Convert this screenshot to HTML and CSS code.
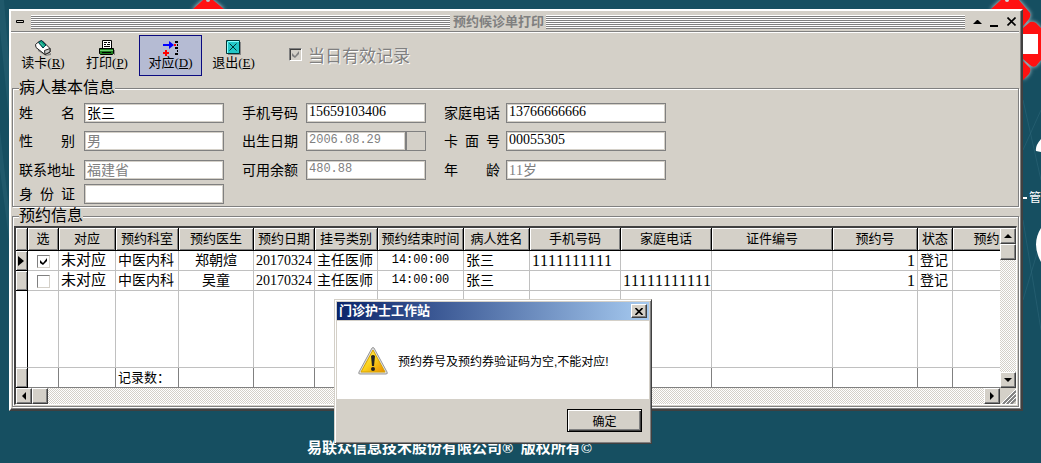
FILE: index.html
```
<!DOCTYPE html>
<html lang="zh-CN">
<head>
    <meta charset="UTF-8">
    <meta name="viewport" content="width=device-width, initial-scale=1.0">
    <title>预约候诊单打印</title>
    <link rel="stylesheet" href="styles.css">
</head>
<body>

<div class="desktop">
    <svg class="wallpaper wallpaper-left" width="240" height="463" viewBox="0 0 240 463">
        <path d="M0 30L9 120V60L4 0H0zM0 170L9 240V210L0 130z" fill="#2a6375" opacity=".5"/>
        <path class="glow" d="M192 10L203 0H213L225 10z" fill="#f11"/>
        <circle cx="208" cy="0" r="2" fill="#b9c7cc"/>
    </svg>
    <svg class="wallpaper wallpaper-right" width="61" height="463" viewBox="0 0 61 463">
        <path d="M43 100L61 180M43 150L61 110M43 220L61 330M43 300L61 240" stroke="#2d6678" fill="none" opacity=".6"/>
        <path class="glow" d="M10 10L22 -1H38L50 13Q51 16 49 19L43 26V10zM43 28L50 22Q53 21 56 23L61 28V60L56 66Q53 68 50 65L43 59zM43 61L50 68Q51 71 49 74L43 80z" fill="#f11"/>
        <circle cx="27" cy="0" r="2" fill="#cfdadd"/>
        <path d="M43 34H58V54H43z" fill="#fff"/>
        <path d="M61 139Q55 146 56 151L61 152zM61 228Q51 244 61 262z" fill="#fff"/>
        <path d="M43 198H47" stroke="#fff" stroke-width="2"/>
    </svg>
    <span class="wallpaper-text">管</span>

    <main class="window">
        <header class="titlebar">
            <button class="tb-btn" type="button" aria-label="系统菜单"><svg width="9" height="4" viewBox="0 0 9 4"><path d="M.5 .5h7v2h-7z" fill="none" stroke="#000"/></svg></button>
            <span class="stripes"></span>
            <h1>预约候诊单打印</h1>
            <span class="stripes"></span>
            <button class="tb-btn" type="button" aria-label="还原"><svg width="9" height="10" viewBox="0 0 9 10"><path d="M0 7L4 3h1l4 4z"/></svg></button>
            <button class="tb-btn" type="button" aria-label="最小化"><svg width="9" height="10" viewBox="0 0 9 10"><path d="M0 8h8v2H0z"/></svg></button>
            <button class="tb-btn" type="button" aria-label="关闭"><svg width="9" height="9" viewBox="0 0 9 9"><path d="M.5 .5l8 8M8.500 .5l-8 8" stroke="#000" stroke-width="1.600"/></svg></button>
        </header>

        <div class="toolbar">
            <button class="tool" type="button">
                <svg width="16" height="16" viewBox="0 0 16 16">
                    <path d="M3 9l8 6 5-2v2l-5 1-8-5z" fill="#888"/>
                    <path d="M.500 4.500L4 1.500l3-1 8 8v3.500L10 14.500 1 7.500z" fill="#fff" stroke="#222"/>
                    <path d="M9.500 10.500l5.500-2v3.500l-5 2.500z" fill="#c8c8c8" stroke="#222"/>
                    <path d="M3.500 2.500l3-2 4.500 4.500-3 3z" fill="#0aa080" stroke="#034"/>
                    <path d="M5 2.500l4 4" stroke="#5fe0c0"/>
                </svg>
                <span>读卡(<u>R</u>)</span>
            </button>
            <button class="tool" type="button">
                <svg width="16" height="16" viewBox="0 0 16 16">
                    <path d="M3.500 .500h9v8h-9z" fill="#fff" stroke="#000"/>
                    <path d="M5 2.500h3M9 2.500h2M5 4.500h2M8 4.500h3M5 6.500h6" stroke="#000"/>
                    <path d="M.500 8.500h14v5l-1 1h-12l-1-1z" fill="#1c7a1c" stroke="#000"/>
                    <path d="M1 10.500h13" stroke="#6fd06f"/>
                    <path d="M3 12.500h9" stroke="#000"/>
                    <path d="M15.500 10v5" stroke="#888"/>
                </svg>
                <span>打印(<u>P</u>)</span>
            </button>
            <button class="tool active" type="button">
                <svg width="16" height="16" viewBox="0 0 16 16">
                    <path d="M0 4h6V1l5 4-5 4V6H0z" fill="#00f"/>
                    <path d="M11 4h2v2h-2zM2 10h2v2h2v2H4v2H2v-2H0v-2h2z" fill="#f00"/>
                    <path d="M12 1h3v2h-3zM14 4h1v2h-1zM12 7h3v2h-3zM14 10h1v2h-1zM12 13h3v2h-3z"/>
                </svg>
                <span>对应(<u>D</u>)</span>
            </button>
            <button class="tool" type="button">
                <svg width="16" height="16" viewBox="0 0 16 16">
                    <path d="M2 2h13v13H2z" fill="#888"/>
                    <path d="M.500 .500h13v13H.500z" fill="#22c8c8" stroke="#033"/>
                    <path d="M2 1.500h11M1.500 2v11" stroke="#8ff"/>
                    <path d="M3.500 3.500l7 7M10.500 3.500l-7 7" stroke="#033"/>
                </svg>
                <span>退出(<u>E</u>)</span>
            </button>
            <label class="today"><input type="checkbox" checked disabled>当日有效记录</label>
        </div>

        <fieldset class="group">
            <legend>病人基本信息</legend>
            <div class="form">
                <label for="name">姓 名</label>
                <input id="name" class="w140" type="text" value="张三">
                <label for="mobile">手机号码</label>
                <input id="mobile" class="w120" type="text" value="15659103406">
                <label for="phone">家庭电话</label>
                <input id="phone" class="w160" type="text" value="13766666666">

                <label for="sex">性 别</label>
                <input id="sex" class="w140" type="text" value="男" disabled>
                <label for="birth">出生日期</label>
                <div class="date w120">
                    <input id="birth" class="mono" type="text" value="2006.08.29" disabled>
                    <button type="button" aria-label="选择日期" disabled></button>
                </div>
                <label for="card">卡 面 号</label>
                <input id="card" class="w160" type="text" value="00055305">

                <label for="address">联系地址</label>
                <input id="address" class="w140" type="text" value="福建省" disabled>
                <label for="balance">可用余额</label>
                <input id="balance" class="w120 mono" type="text" value="480.88" disabled>
                <label for="age">年 龄</label>
                <input id="age" class="w160" type="text" value="11岁" disabled>

                <label for="idcard">身 份 证</label>
                <input id="idcard" class="w140" type="text" value="">
            </div>
        </fieldset>

        <fieldset class="group grid-group">
            <legend>预约信息</legend>
            <div class="grid">
                <div class="table-wrap">
                    <table>
                        <colgroup>
                            <col class="c12"><col class="c31"><col class="c57"><col class="c63"><col class="c75">
                            <col class="c61"><col class="c63"><col class="c86"><col class="c66"><col class="c91">
                            <col class="c91"><col class="c121"><col class="c85"><col class="c35"><col class="c94">
                        </colgroup>
                        <thead>
                            <tr>
                                <th></th><th>选</th><th>对应</th><th>预约科室</th><th>预约医生</th>
                                <th>预约日期</th><th>挂号类别</th><th>预约结束时间</th><th>病人姓名</th><th>手机号码</th>
                                <th>家庭电话</th><th>证件编号</th><th>预约号</th><th>状态</th><th>预约来源</th>
                            </tr>
                        </thead>
                        <tbody>
                            <tr>
                                <td class="ind"><svg width="6" height="10" viewBox="0 0 6 10"><path d="M0 0l6 5-6 5z"/></svg></td>
                                <td class="center"><input type="checkbox" aria-label="选择郑朝煊" checked></td>
                                <td class="big">未对应</td><td>中医内科</td><td class="center">郑朝煊</td>
                                <td>20170324</td><td>主任医师</td><td class="center mono">14:00:00</td><td>张三</td><td class="tel">1111111111</td>
                                <td></td><td></td><td class="num">1</td><td>登记</td><td></td>
                            </tr>
                            <tr>
                                <td class="ind"></td>
                                <td class="center"><input type="checkbox" aria-label="选择吴童"></td>
                                <td class="big">未对应</td><td>中医内科</td><td class="center">吴童</td>
                                <td>20170324</td><td>主任医师</td><td class="center mono">14:00:00</td><td>张三</td><td></td>
                                <td class="tel">11111111111</td><td></td><td class="num">1</td><td>登记</td><td></td>
                            </tr>
                            <tr class="filler">
                                <td></td><td></td><td></td><td></td><td></td><td></td><td></td><td></td>
                                <td></td><td></td><td></td><td></td><td></td><td></td><td></td>
                            </tr>
                        </tbody>
                        <tfoot>
                            <tr>
                                <td class="ind"></td><td></td><td></td><td>记录数：</td><td></td><td></td><td></td><td></td>
                                <td></td><td></td><td></td><td></td><td></td><td></td><td></td>
                            </tr>
                        </tfoot>
                    </table>
                </div>
                <div class="scroll vscroll">
                    <button type="button" aria-label="向上"><svg width="8" height="4" viewBox="0 0 8 4"><path d="M0 4l4-4 4 4z"/></svg></button>
                    <span class="thumb"></span>
                    <button class="last" type="button" aria-label="向下"><svg width="8" height="4" viewBox="0 0 8 4"><path d="M0 0h8L4 4z"/></svg></button>
                </div>
                <div class="scroll hscroll">
                    <button type="button" aria-label="向左"><svg width="4" height="8" viewBox="0 0 4 8"><path d="M4 0v8L0 4z"/></svg></button>
                    <span class="thumb"></span>
                    <button class="last" type="button" aria-label="向右"><svg width="4" height="8" viewBox="0 0 4 8"><path d="M0 0l4 4-4 4z"/></svg></button>
                </div>
                <svg class="grip" width="16" height="16" viewBox="0 0 16 16">
                    <path d="M3 16L16 3M7 16l9-9M11 16l5-5" stroke="#808080" stroke-width="2"/>
                    <path d="M1 16L16 1M5 16L16 5M9 16l7-7" stroke="#fff"/>
                </svg>
            </div>
        </fieldset>
    </main>

    <p class="copyright">易联众信息技术股份有限公司® &nbsp;版权所有©</p>

    <div class="dialog" role="dialog" aria-labelledby="dialogTitle">
        <div class="dialog-title">
            <h2 id="dialogTitle">门诊护士工作站</h2>
            <button class="close" type="button" aria-label="关闭"><svg width="8" height="7" viewBox="0 0 8 7"><path d="M.5 0l7 7M7.500 0l-7 7" stroke="#000" stroke-width="1.600"/></svg></button>
        </div>
        <div class="dialog-body">
            <svg width="32" height="30" viewBox="0 0 32 30">
                <defs>
                    <linearGradient id="warn" x1="0" y1="0" x2="1" y2="1">
                        <stop offset="0" stop-color="#fff36a"/>
                        <stop offset=".5" stop-color="#fcd21c"/>
                        <stop offset="1" stop-color="#e88a00"/>
                    </linearGradient>
                </defs>
                <path d="M15 2Q16 1 17 2L30 26Q31 28 29 28H3Q1 28 2 26z" fill="#ddd" stroke="#999"/>
                <path d="M16 4L28 26H4z" fill="url(#warn)" stroke="#d9a400"/>
                <path d="M14 10Q16 8 18 10L17 20H15z" fill="#222"/>
                <circle cx="16" cy="23" r="2" fill="#222"/>
            </svg>
            <p>预约券号及预约券验证码为空,不能对应!</p>
        </div>
        <div class="dialog-footer">
            <button class="ok" type="button">确定</button>
        </div>
    </div>
</div>

</body>
</html>
```
FILE: styles.css
```
* {
    box-sizing: border-box;
}
body {
    margin: 0;
    font-family: "Liberation Serif", "Noto Sans CJK SC", serif;
    font-size: 14px;
    font-kerning: none;
    color: #000;
}
h1, h2, p {
    margin: 0;
}
button, input {
    font-family: inherit;
    font-kerning: inherit;
    color: inherit;
    padding: 0;
    margin: 0;
    border-radius: 0;
}
button {
    display: flex;
    align-items: center;
    justify-content: center;
    border: 0;
    background: #d4d0c8;
}
.mono {
    font-family: "Liberation Mono", "Noto Sans CJK SC", monospace;
    font-size: 12px;
}

/* desktop */
.desktop {
    position: relative;
    min-height: 100vh;
    padding: 9px 18px 0 9px;
    background: #164f61;
    overflow: hidden;
}
.wallpaper {
    position: absolute;
    top: 0;
}
.wallpaper-left {
    left: 0;
}
.wallpaper-right {
    right: 0;
}
.glow {
    filter: drop-shadow(0 0 2px #cfdadd);
}
.wallpaper-text {
    position: absolute;
    top: 188px;
    right: 0;
    font-size: 12px;
    line-height: 20px;
    color: #fff;
}
.copyright {
    margin: 26px 0 0 298px;
    font-size: 15px;
    line-height: 22px;
    font-weight: bold;
    color: #fff;
}

/* main window */
.window {
    position: relative;
    padding-bottom: 2px;
    background: #d4d0c8;
    border: 2px solid;
    border-color: #fff #404040 #404040 #fff;
    box-shadow: inset -1px -1px 0 #808080;
}
.titlebar {
    display: flex;
    align-items: center;
    height: 22px;
    padding: 0 3px 0 5px;
    margin-right: 2px;
    border-bottom: 1px solid #fff;
    box-shadow: inset 0 -1px 0 #808080;
}
.titlebar h1 {
    padding: 0 2px 0 3px;
    font-size: 13px;
    line-height: 18px;
    font-weight: bold;
    color: #808080;
}
.tb-btn {
    width: 9px;
    height: 18px;
    margin-left: 8px;
    background: none;
}
.tb-btn:first-child {
    margin: 0 6px 0 0;
}
.stripes {
    flex: 1;
    height: 14px;
    background: repeating-linear-gradient(#fff 0 1px, #808080 1px 2px);
}

/* toolbar */
.toolbar {
    display: flex;
    height: 47px;
    padding-top: 2px;
}
.tool {
    flex-direction: column;
    justify-content: flex-start;
    width: 64px;
    height: 41px;
    padding-top: 4px;
    border: 1px solid transparent;
    background: none;
    font-size: 13px;
    line-height: 13px;
}
.tool.active {
    width: 63px;
    border-color: #0a0a80;
    background: #b5bbd3;
}
.tool.active + .tool {
    width: 63px;
}
.today {
    display: flex;
    align-items: center;
    gap: 6px;
    height: 38px;
    margin-left: 24px;
    font-size: 17px;
    color: #808080;
    text-shadow: 1px 1px 0 #fff;
}
input[type="checkbox"] {
    appearance: none;
    display: inline-block;
    width: 13px;
    height: 13px;
    border: 1px solid;
    border-color: #808080 #d4d0c8 #d4d0c8 #808080;
    background: #fff;
    vertical-align: middle;
}
input[type="checkbox"]:checked {
    background: #fff url("data:image/svg+xml,%3Csvg xmlns='http://www.w3.org/2000/svg' viewBox='0 0 11 11'%3E%3Cpath d='M2 4l3 3 4-5v3L5 9 2 7z'/%3E%3C/svg%3E");
}
input[type="checkbox"]:disabled {
    background: #d4d0c8 url("data:image/svg+xml,%3Csvg xmlns='http://www.w3.org/2000/svg' viewBox='0 0 11 11'%3E%3Cpath d='M2 4l3 3 4-5v3L5 9 2 7z' fill='%23808080'/%3E%3C/svg%3E");
    border-right-color: #fff;
    border-bottom-color: #fff;
    box-shadow: inset 1px 1px 0 #404040;
}

/* group boxes */
.group {
    min-width: 0;
    margin: 0 2px 0 1px;
    padding: 7px 6px 2px;
    border: 1px solid #808080;
    box-shadow: inset 1px 1px 0 #fff, 1px 1px 0 #fff;
}
.group legend {
    position: relative;
    height: 16px;
    padding: 0;
    background: #d4d0c8;
    font-size: 16px;
    line-height: 16px;
}
.form {
    display: grid;
    grid-template-columns: 65px 158px 64px 138px 62px 160px;
    grid-template-rows: 28px 29px 24px 20px;
    align-items: start;
}
.form label {
    width: 56px;
    line-height: 21px;
    text-align-last: justify;
}
.form input {
    height: 20px;
    padding: 0 2px 2px;
    border: 1px solid #808080;
    box-shadow: inset 0 0 0 1px #d4d0c8;
    background: #fff;
    font-size: 14px;
}
.form input:disabled {
    color: #808080;
}
.form input.mono {
    font-size: 12px;
}
.w120 {
    width: 120px;
}
.w140 {
    width: 140px;
}
.w160 {
    width: 160px;
}
.date {
    display: flex;
}
.date input {
    flex: 1;
    min-width: 0;
}
.date button {
    width: 20px;
    border: 1px solid #808080;
}

/* appointment grid */
.grid-group {
    margin-top: 1px;
    padding: 2px 1px 1px;
}
.grid-group legend {
    margin-left: 5px;
}
.grid {
    display: grid;
    grid-template-columns: minmax(0, 1fr) 16px;
    grid-template-rows: auto 16px;
    border: 1px solid;
    border-color: #404040 #fff #fff #404040;
    border-width: 2px 1px 1px 2px;
}
.table-wrap {
    overflow: hidden;
    background: #fff;
}
table {
    width: 1031px;
    table-layout: fixed;
    border-spacing: 0;
}
.c12 { width: 12px; }
.c31 { width: 31px; }
.c35 { width: 35px; }
.c57 { width: 57px; }
.c61 { width: 61px; }
.c63 { width: 63px; }
.c66 { width: 66px; }
.c75 { width: 75px; }
.c85 { width: 85px; }
.c86 { width: 86px; }
.c91 { width: 91px; }
.c94 { width: 94px; }
.c121 { width: 121px; }
th, td {
    padding: 0 2px;
    white-space: nowrap;
    overflow: hidden;
}
th {
    height: 23px;
    padding: 0;
    border-right: 1px solid #000;
    border-bottom: 1px solid #000;
    background: #d4d0c8;
    box-shadow: inset 1px 1px 0 #fff, inset -1px -1px 0 #808080;
    font-size: 13px;
    line-height: 20px;
    font-weight: normal;
}
td {
    height: 20px;
    border-right: 1px solid #c0c0c0;
    border-bottom: 1px solid #c0c0c0;
    line-height: 19px;
}
td:first-child {
    border-right-color: #000;
}
td.ind {
    border-bottom-color: #000;
    background: #d4d0c8;
    box-shadow: inset 1px 1px 0 #fff, inset -1px -1px 0 #808080;
    line-height: 0;
}
td.center {
    text-align: center;
}
td.big {
    font-size: 15px;
}
td.tel {
    padding-right: 0;
    font-size: 16px;
}
td.num {
    font-size: 16px;
    text-align: right;
}
.filler td {
    height: 77px;
}
tfoot td {
    border-color: #808080;
    font-size: 13px;
    line-height: 17px;
}

/* scroll bars */
.scroll {
    display: flex;
    background: repeating-conic-gradient(#fff 0 25%, #d4d0c8 0 50%) 0 0 / 2px 2px;
}
.vscroll {
    flex-direction: column;
}
.hscroll {
    grid-row: 2;
}
.scroll button, .thumb {
    width: 16px;
    height: 16px;
    border: 1px solid;
    border-color: #fff #404040 #404040 #fff;
    box-shadow: inset -1px -1px 0 #808080;
    background: #d4d0c8;
}
.vscroll .last {
    margin-top: auto;
}
.hscroll .last {
    margin-left: auto;
}
.grip {
    background: #d4d0c8;
}

/* message box */
.dialog {
    position: absolute;
    left: 334px;
    top: 299px;
    width: 318px;
    padding: 1px;
    border: 1px solid;
    border-color: #d4d0c8 #404040 #404040 #d4d0c8;
    box-shadow: inset 1px 1px 0 #fff, inset -1px -1px 0 #808080;
    background: #d4d0c8;
    font-family: "Liberation Sans", "Noto Sans CJK SC", sans-serif;
    font-size: 12px;
}
.dialog-title {
    display: flex;
    align-items: center;
    justify-content: space-between;
    height: 18px;
    margin: 1px;
    padding: 0 2px;
    background: linear-gradient(to right, #0a246a, #a6caf0);
}
.dialog-title h2 {
    font-size: 13px;
    line-height: 18px;
    font-weight: bold;
    color: #fff;
}
.close {
    width: 16px;
    height: 14px;
    border: 1px solid;
    border-color: #fff #404040 #404040 #fff;
    box-shadow: inset -1px -1px 0 #808080;
}
.dialog-body {
    display: flex;
    align-items: center;
    gap: 9px;
    height: 78px;
    margin: 0 1px;
    padding: 1px 0 0 20px;
    background: #fff;
}
.dialog-footer {
    display: flex;
    justify-content: flex-end;
    height: 43px;
    padding: 10px 8px 0 0;
}
.ok {
    width: 75px;
    height: 23px;
    border: 1px solid #000;
    box-shadow: inset 1px 1px 0 #fff, inset -1px -1px 0 #404040, inset -2px -2px 0 #808080;
    font-size: 12px;
}
```
